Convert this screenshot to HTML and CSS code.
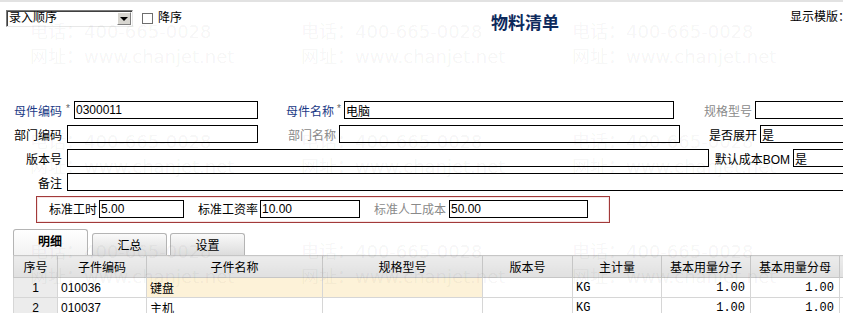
FILE: index.html
```html
<!DOCTYPE html>
<html lang="zh-CN">
  <head>
    <meta charset="UTF-8" />
    <title>物料清单</title>
    <link rel="stylesheet" href="styles.css">
  </head>
  <body>
    <div class="page">
      <div class="toolbar">
        <div class="combo">
          <span class="combo-text">录入顺序</span>
          <span class="combo-btn"><i></i></span>
        </div>
        <span class="check"></span>
        <span class="check-label">降序</span>
        <h1 class="title">物料清单</h1>
        <span class="view-tpl">显示模版：</span>
      </div>

      <div class="form">
        <div class="row">
          <label class="lbl lbl-key w62">母件编码</label><span class="star">*</span>
          <input class="box" style="width:184px" value="0300011" />
          <label class="lbl lbl-key w76">母件名称</label><span class="star s10">*</span>
          <input class="box" style="width:330px" value="电脑" />
          <label class="lbl lbl-off w78">规格型号</label>
          <input class="box gap3" style="width:120px" value="" />
        </div>
        <div class="row">
          <label class="lbl w62">部门编码</label>
          <input class="box gap5" style="width:191px" value="" />
          <label class="lbl lbl-off w78">部门名称</label>
          <input class="box gap3" style="width:341px" value="" />
          <label class="lbl w77">是否展开</label>
          <input class="box gap3" style="width:120px" value="是" />
        </div>
        <div class="row">
          <label class="lbl w62">版本号</label>
          <input class="box gap5" style="width:642px" value="" />
          <label class="lbl w81">默认成本BOM</label>
          <input class="box gap3" style="width:120px" value="是" />
        </div>
        <div class="row">
          <label class="lbl w62">备注</label>
          <input class="box gap5" style="width:833px" value="" />
        </div>
      </div>

      <div class="labor">
        <label class="labor-lbl first">标准工时</label>
        <input class="box" style="width:85px" value="5.00" />
        <label class="labor-lbl l2">标准工资率</label>
        <input class="box" style="width:100px" value="10.00" />
        <label class="labor-lbl l3 lbl-off">标准人工成本</label>
        <input class="box" style="width:139px" value="50.00" />
      </div>

      <div class="tabs">
        <div class="tab active">明细</div>
        <div class="tab">汇总</div>
        <div class="tab">设置</div>
      </div>

      <table class="grid">
        <colgroup>
          <col style="width:44px" />
          <col style="width:89px" />
          <col style="width:176px" />
          <col style="width:160px" />
          <col style="width:90px" />
          <col style="width:89px" />
          <col style="width:89px" />
          <col style="width:89px" />
          <col style="width:60px" />
        </colgroup>
        <thead>
          <tr>
            <th>序号</th>
            <th>子件编码</th>
            <th>子件名称</th>
            <th>规格型号</th>
            <th>版本号</th>
            <th>主计量</th>
            <th>基本用量分子</th>
            <th>基本用量分母</th>
            <th></th>
          </tr>
        </thead>
        <tbody>
          <tr class="current">
            <td class="idx">1</td>
            <td>010036</td>
            <td class="hl">键盘</td>
            <td class="hl"></td>
            <td></td>
            <td class="mono">KG</td>
            <td class="mono num">1.00</td>
            <td class="mono num">1.00</td>
            <td></td>
          </tr>
          <tr>
            <td class="idx">2</td>
            <td>010037</td>
            <td>主机</td>
            <td></td>
            <td></td>
            <td class="mono">KG</td>
            <td class="mono num">1.00</td>
            <td class="mono num">1.00</td>
            <td></td>
          </tr>
        </tbody>
      </table>

      <!-- 水印 -->
      <div class="watermark">
        <div class="wm"><p>电话：400-665-0028</p><p>网址：www.chanjet.net</p></div>
        <div class="wm"><p>电话：400-665-0028</p><p>网址：www.chanjet.net</p></div>
        <div class="wm"><p>电话：400-665-0028</p><p>网址：www.chanjet.net</p></div>
        <div class="wm"><p>电话：400-665-0028</p><p>网址：www.chanjet.net</p></div>
        <div class="wm"><p>电话：400-665-0028</p><p>网址：www.chanjet.net</p></div>
        <div class="wm"><p>电话：400-665-0028</p><p>网址：www.chanjet.net</p></div>
        <div class="wm"><p>电话：400-665-0028</p><p>网址：www.chanjet.net</p></div>
        <div class="wm"><p>电话：400-665-0028</p><p>网址：www.chanjet.net</p></div>
        <div class="wm"><p>电话：400-665-0028</p><p>网址：www.chanjet.net</p></div>
      </div>
    </div>
  </body>
</html>
```

FILE: styles.css
```css
* {
  box-sizing: border-box;
  margin: 0;
  padding: 0;
}

html,
body {
  width: 843px;
  height: 313px;
  overflow: hidden;
  background: #fff;
}

body {
  font-family: "Liberation Sans", "Noto Sans CJK SC", sans-serif;
  font-size: 12px;
  color: #000;
}

.page {
  position: relative;
  width: 843px;
  height: 313px;
  overflow: hidden;
  border-top: 2px solid #e2e2e2;
}

/* 顶部工具条 */
.toolbar {
  display: flex;
  align-items: flex-start;
  width: 920px;
  height: 21px;
  margin-top: 8px;
  white-space: nowrap;
}

.toolbar > * {
  flex-shrink: 0;
}

.combo {
  display: flex;
  align-items: center;
  width: 127px;
  height: 17px;
  margin-left: 6px;
  border: 1px solid;
  border-color: #7a7a7a #e8e8e8 #e8e8e8 #7a7a7a;
  box-shadow: inset 1px 1px 0 #404040;
  background: #fff;
}

.combo-text {
  flex: 1;
  padding-left: 2px;
  font-size: 12px;
  line-height: 15px;
}

.combo-btn {
  display: flex;
  align-items: center;
  justify-content: center;
  width: 14px;
  height: 13px;
  margin-right: 1px;
  background: #d8d6d0;
  border: 1px solid;
  border-color: #fff #808080 #808080 #fff;
}

.combo-btn i {
  width: 0;
  height: 0;
  border-left: 4px solid transparent;
  border-right: 4px solid transparent;
  border-top: 4px solid #000;
}

.check {
  width: 11px;
  height: 11px;
  margin: 3px 0 0 9px;
  border: 1px solid #6e6e6e;
  background: #fff;
}

.check-label {
  margin-left: 5px;
  line-height: 17px;
}

.title {
  margin: 1px 0 0 309px;
  font-size: 17px;
  line-height: 22px;
  font-weight: bold;
  color: #0d2a5c;
  font-family: "Noto Sans CJK SC", sans-serif;
}

.view-tpl {
  margin-left: 231px;
  line-height: 15px;
}

/* 表头字段 */
.form {
  display: flex;
  flex-direction: column;
  gap: 6px;
  margin-top: 70px;
}

.row {
  display: flex;
  align-items: center;
  height: 18px;
  white-space: nowrap;
}

.lbl {
  flex-shrink: 0;
  text-align: right;
}

.lbl-key {
  color: #1b3a86;
}

.lbl-off {
  color: #8a8a8a;
}

.w62 { width: 62px; }
.w76 { width: 76px; }
.w77 { width: 77px; }
.w78 { width: 78px; }
.w81 { width: 81px; }

.star {
  width: 12px;
  flex-shrink: 0;
  text-align: center;
  font-size: 10px;
  color: #666;
  margin-top: -3px;
}

.s10 {
  width: 10px;
}

.gap3 { margin-left: 3px; }
.gap5 { margin-left: 5px; }

.box {
  flex-shrink: 0;
  height: 18px;
  padding: 0 1px;
  border: 1px solid #000;
  background: transparent;
  font-family: "Liberation Sans", "Noto Sans CJK SC", sans-serif;
  font-size: 12px;
  color: #000;
  outline: none;
}

/* 人工成本 */
.labor {
  display: flex;
  align-items: center;
  width: 574px;
  height: 27px;
  margin: 5px 0 0 36px;
  padding: 1px 0 3px;
  border: 1px solid #a23a3a;
  box-shadow: inset 0 0 0 1px #f6e4e4;
  white-space: nowrap;
}

.labor-lbl {
  flex-shrink: 0;
}

.labor-lbl.first {
  width: 50px;
  margin-left: 12px;
}

.labor-lbl.l2 {
  width: 62px;
  margin-left: 14px;
}

.labor-lbl.l3 {
  width: 75px;
  margin-left: 14px;
}

/* 页签 */
.tabs {
  display: flex;
  align-items: flex-end;
  gap: 3px;
  height: 26px;
  margin: 6px 0 0 13px;
}

.tab {
  width: 75px;
  height: 22px;
  padding-top: 4px;
  text-align: center;
  font-family: "Noto Sans CJK SC", sans-serif;
  font-size: 12px;
  line-height: 14px;
  border: 1px solid #b4b4b4;
  border-bottom: none;
  border-radius: 3px 3px 0 0;
  background: linear-gradient(#fafafa, #dcdcdc);
}

.tab.active {
  height: 26px;
  padding-top: 4px;
  margin-right: 1px;
  font-weight: bold;
  text-align: left;
  padding-left: 24px;
  background: linear-gradient(#fff, #f2f2f2);
}

/* 明细表 */
.grid {
  margin-left: 13px;
  border-collapse: collapse;
  table-layout: fixed;
  width: 886px;
}

.grid th {
  height: 22px;
  font-weight: normal;
  font-family: "Noto Sans CJK SC", sans-serif;
  font-size: 12px;
  background: linear-gradient(#ececec, #e0e0e0);
  border: 1px solid #c6c6c6;
}

.grid td {
  height: 20px;
  padding: 0 3px;
  border: 1px solid #d6d6d6;
  font-size: 12px;
  white-space: nowrap;
}

.grid td.idx {
  text-align: center;
  background: #ececec;
}

.grid td.hl {
  background: #fdf2d8;
}

.grid td.mono {
  font-family: "Liberation Mono", monospace;
  font-size: 12px;
}

.grid td.num {
  text-align: right;
  padding-right: 5px;
}

/* 水印：浮在页面上，不挡点击 */
.watermark {
  position: absolute;
  top: 17px;
  left: 30px;
  display: grid;
  grid-template-columns: repeat(3, 271px);
  grid-auto-rows: 110px;
  pointer-events: none;
}

.wm p {
  height: 25px;
  font-family: "DejaVu Sans", sans-serif;
  font-size: 18px;
  line-height: 25px;
  color: rgba(0, 0, 0, 0.05);
  white-space: nowrap;
}
```
